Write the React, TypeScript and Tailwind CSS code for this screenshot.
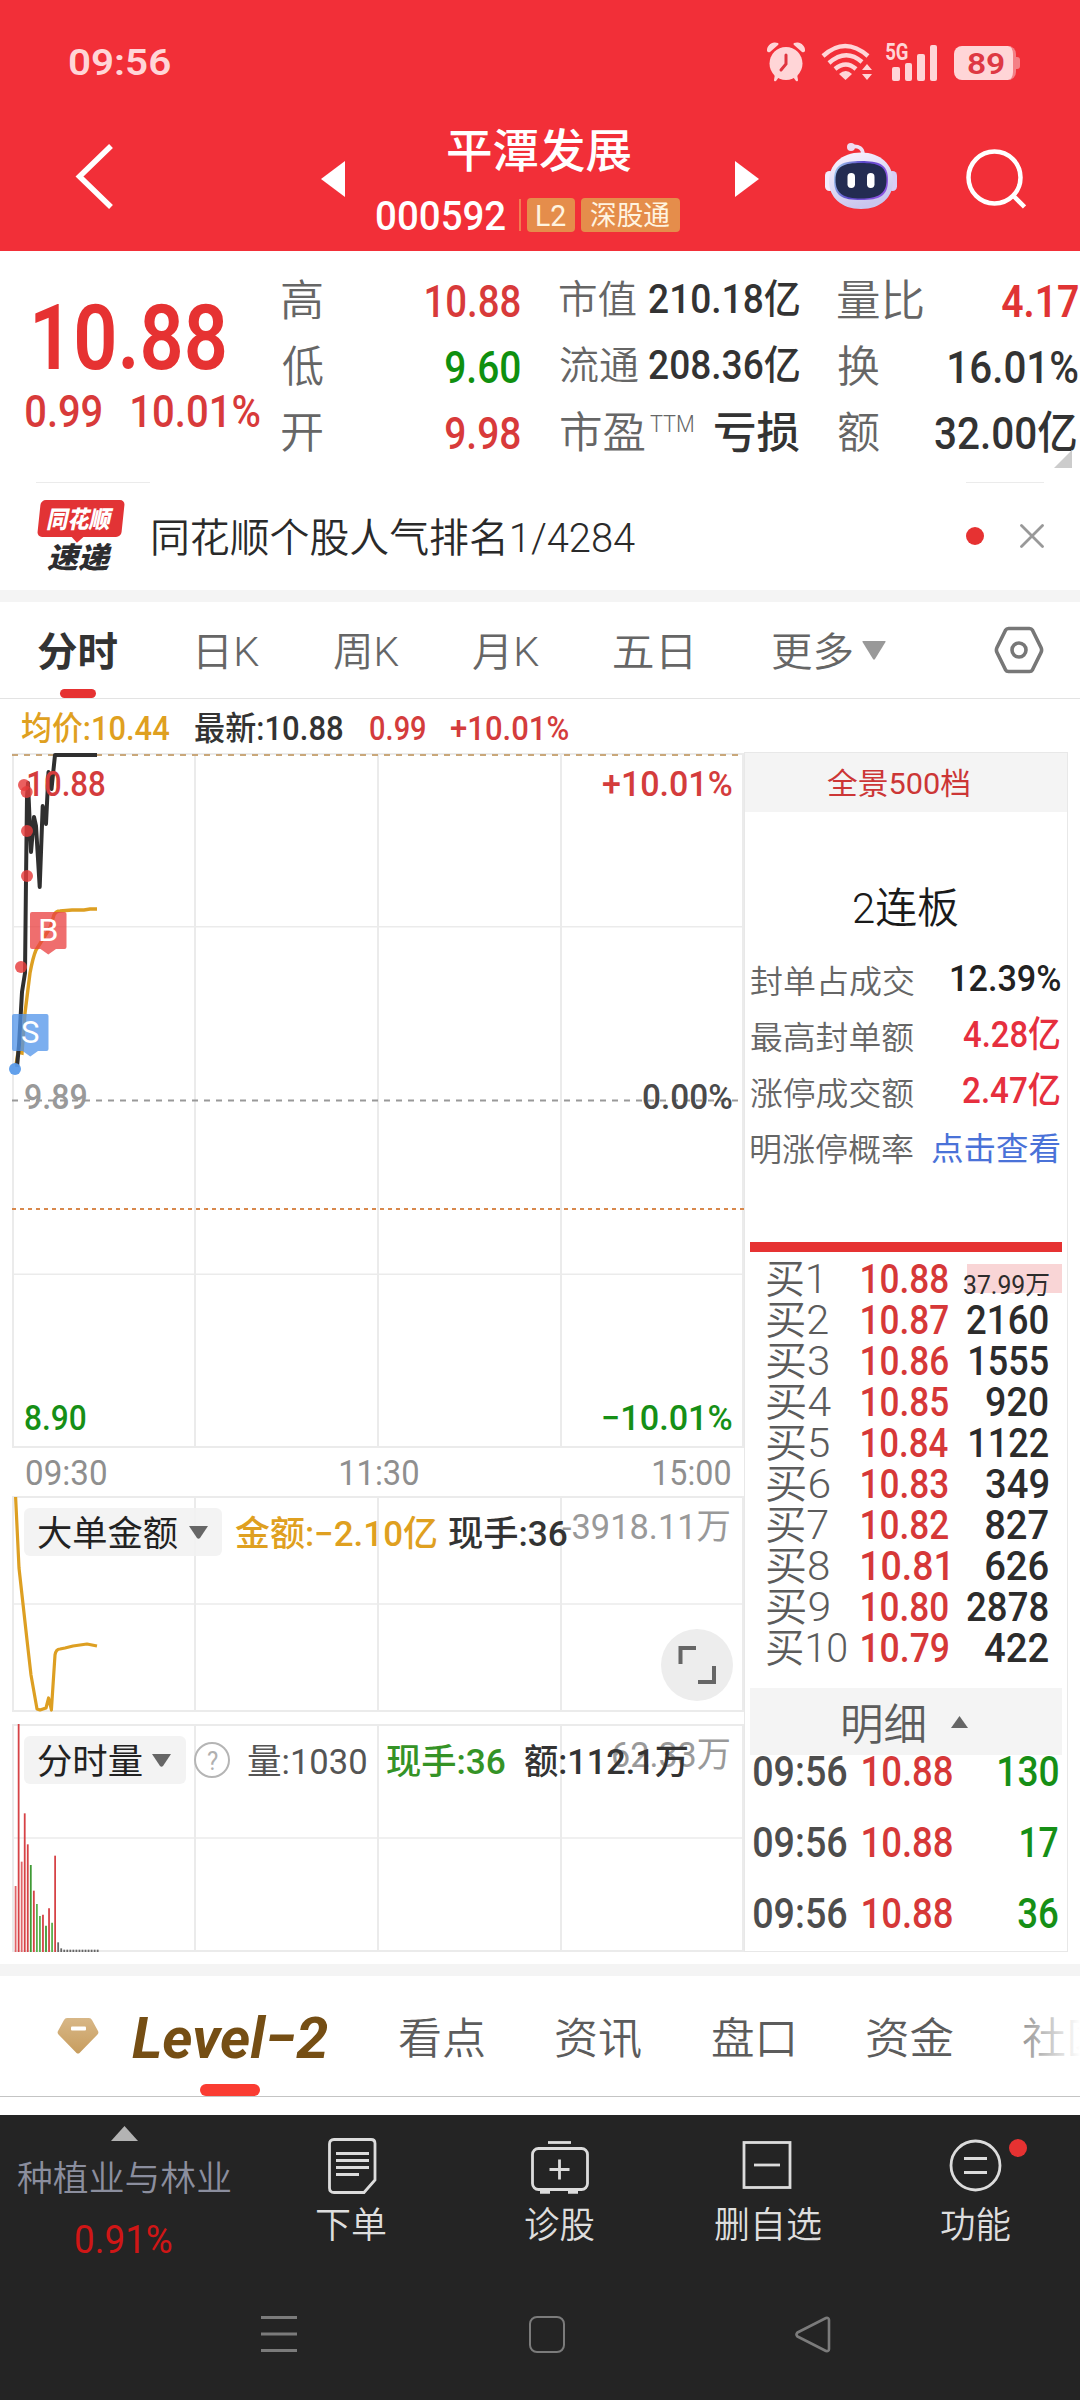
import React, { useLayoutEffect, useRef } from "react";

/** One line of text whose ink is stretched horizontally to fill the box given by className. */
function Fit({ children, className = "" }: { children: string; className?: string }) {
  const box = useRef<HTMLDivElement>(null);
  const ink = useRef<HTMLSpanElement>(null);
  useLayoutEffect(() => {
    const b = box.current;
    const t = ink.current;
    const ctx = document.createElement("canvas").getContext("2d");
    if (!b || !t || !ctx) return;
    const cs = getComputedStyle(t);
    ctx.font = `${cs.fontStyle} ${cs.fontWeight} ${cs.fontSize} ${cs.fontFamily}`;
    const m = ctx.measureText(children);
    const left = -m.actualBoundingBoxLeft;
    const k = b.clientWidth / (m.actualBoundingBoxRight - left);
    t.style.transform = `translate(${-left * k}px, 0.035em) scaleX(${k})`;
  }, [children]);
  return (
    <div ref={box} className={"shrink-0 whitespace-nowrap leading-none " + className}>
      <span ref={ink} className="block w-max origin-left">
        {children}
      </span>
    </div>
  );
}

function StatusBar() {
  return (
    <div className="flex h-[123px] items-center text-[#ffd5d7]">
      <Fit className="ml-[69px] w-[101px] text-[37px] font-semibold">09:56</Fit>
      <svg className="ml-[597px] h-[40px] w-[38px] shrink-0" viewBox="0 0 38 40" fill="currentColor">
        <path d="M0 9a8 8 0 0 1 11-8q1 1 0 2L3 10Q1 11 0 9Z M38 9a8 8 0 0 0-11-8q-1 1 0 2l8 7q2 1 3-1Z" />
        <path d="M8 32l4 3-3 4q-2 1-2-1z M30 32l-4 3 3 4q2 1 2-1z" />
        <circle cx="19" cy="21.5" r="16.5" />
        <path d="M19 13v9l-5 6" fill="none" stroke="#e0353f" strokeWidth="3" strokeLinecap="round" />
      </svg>
      <svg className="ml-[16px] h-[38px] w-[52px] shrink-0" viewBox="0 0 52 38" fill="none" stroke="currentColor">
        <path d="M2 13Q24-7 47 13" strokeWidth="4.4" />
        <path d="M8 20Q25 5 41 19" strokeWidth="4.4" />
        <path d="M14 26Q25 17 35 26" strokeWidth="4.4" />
        <path d="M18 31q7-6 13 0l-6.500 6z" fill="currentColor" stroke="none" />
        <path d="M41 27l5-6 5 6z M41 31l5 6 5-6z" fill="currentColor" stroke="none" />
      </svg>
      <div className="relative ml-[13px] h-[38px] w-[52px] shrink-0">
        <Fit className="absolute left-0 top-[-3px] w-[22px] text-[23px] font-bold">5G</Fit>
        <div className="flex h-full items-end gap-[5px] pl-[6px]">
          <i className="h-[14px] w-[7.500px] rounded-[2px] bg-[#ffd5d7]" />
          <i className="h-[18px] w-[7.500px] rounded-[2px] bg-[#ffd5d7]" />
          <i className="h-[27px] w-[7.500px] rounded-[2px] bg-[#ffd5d7]" />
          <i className="h-[36px] w-[7.500px] rounded-[2px] bg-[#ffd5d7]" />
        </div>
      </div>
      <div className="ml-[16px] mt-[3px] flex h-[34px] w-[62px] shrink-0 items-center overflow-hidden rounded-[8px] border-r-[3px] border-[#f47f86] bg-[#ffd5d7] pl-[14px]">
        <Fit className="w-[36px] text-[30px] font-semibold text-[#de3843]">89</Fit>
      </div>
      <div className="mt-[3px] h-[12px] w-[4px] rounded-r-[3px] bg-[#f47f86]" />
    </div>
  );
}

function Robot() {
  return (
    <svg className="h-[66px] w-[72px]" viewBox="0 0 72 66">
      <defs>
        <linearGradient id="shell" x1="0" y1="0" x2="0.4" y2="1">
          <stop offset="0" stopColor="#fdf6ff" />
          <stop offset="1" stopColor="#c9c6ee" />
        </linearGradient>
        <linearGradient id="rim" x1="0" y1="0" x2="1" y2="0.3">
          <stop offset="0" stopColor="#a9dcf5" />
          <stop offset="0.5" stopColor="#5a48c8" />
          <stop offset="1" stopColor="#8a55e0" />
        </linearGradient>
      </defs>
      <path d="M27 3.500q11-1 11 8" fill="none" stroke="#efe0f4" strokeWidth="3.600" />
      <circle cx="26" cy="4" r="4" fill="#efdcf1" />
      <rect x="0" y="28" width="9" height="20" rx="4.500" fill="#f3ecfd" />
      <rect x="63" y="28" width="9" height="20" rx="4.500" fill="#d9cdf5" />
      <path d="M36 9.500C56 9.500 68 22 68 38S56 66 36 66 4 54 4 38 16 9.500 36 9.500Z" fill="url(#shell)" />
      <path d="M36 18c18 0 27 3 27 19s-8 20-27 20S9 53 9 37s9-19 27-19Z" fill="url(#rim)" />
      <path d="M36 20c17 0 25.500 3 25.500 17s-8.500 18.500-25.500 18.500-25.500-4.500-25.500-18.500 8.500-17 25.500-17Z" fill="#232c52" />
      <rect x="22.500" y="30" width="7.500" height="15" rx="3.700" fill="#fff" />
      <rect x="42" y="30" width="7.500" height="15" rx="3.700" fill="#fff" />
    </svg>
  );
}

function Header() {
  return (
    <header className="h-[251px] bg-[#f22f38] text-white">
      <StatusBar />
      <div className="flex h-[128px] items-start">
        <svg className="ml-[74px] mt-[20px] h-[66px] w-[40px] shrink-0" viewBox="0 0 40 66" fill="none" stroke="#fff" strokeWidth="5.500">
          <path d="M37 3 5.500 33.500 37 64" />
        </svg>
        <svg className="ml-[207px] mt-[38px] h-[36px] w-[24px] shrink-0" viewBox="0 0 24 36" fill="#fff">
          <path d="M24 0v36L0 18z" />
        </svg>
        <div className="ml-[32px] w-[303px] shrink-0 pt-[3px]">
          <Fit className="ml-[71px] w-[183px] text-[46px] font-medium">平潭发展</Fit>
          <div className="mt-[26px] flex h-[34px] items-center">
            <Fit className="w-[128px] text-[41px] font-medium">000592</Fit>
            <div className="ml-[14px] h-[32px] w-[2px] bg-[#f27b50]" />
            <div className="ml-[6px] flex h-[34px] w-[48px] items-center rounded-[4px] bg-[#e58d4b] pl-[10px] text-[#fff4e0]">
              <Fit className="w-[29px] text-[29px]">L2</Fit>
            </div>
            <div className="ml-[6px] flex h-[34px] w-[99px] items-center rounded-[4px] bg-[#e58d4b] pl-[10px] text-[#fff4e0]">
              <Fit className="w-[79px] text-[27px]">深股通</Fit>
            </div>
          </div>
        </div>
        <svg className="ml-[55px] mt-[38px] h-[36px] w-[24px] shrink-0" viewBox="0 0 24 36" fill="#fff">
          <path d="M0 0v36l24-18z" />
        </svg>
        <div className="ml-[66px] mt-[20px] shrink-0">
          <Robot />
        </div>
        <svg className="ml-[69px] mt-[26px] h-[60px] w-[60px] shrink-0" viewBox="0 0 60 60" fill="none" stroke="#fff" strokeWidth="4.500">
          <circle cx="28.500" cy="28.500" r="26" />
          <path d="M47.500 47 58.500 58" />
        </svg>
      </div>
    </header>
  );
}

function Quote() {
  return (
    <section className="relative flex h-[231px] bg-white text-[#333]">
      <div className="w-[282px] pt-[40px]">
        <Fit className="ml-[35px] w-[190px] text-[90px] font-semibold text-[#e63232]">10.88</Fit>
        <div className="mt-[6px] flex text-[45px] font-medium text-[#d83a3a]">
          <Fit className="ml-[26px] w-[75px]">0.99</Fit>
          <Fit className="ml-[31px] w-[128px]">10.01%</Fit>
        </div>
      </div>
      <div className="w-[238px] pt-[15px] text-[45px] font-medium text-[#d83a3a]">
        <div className="flex h-[66px] items-center justify-between">
          <Fit className="w-[40px] text-[43px] font-[350] text-[#666]">高</Fit>
          <Fit className="w-[94px]">10.88</Fit>
        </div>
        <div className="flex h-[66px] items-center justify-between">
          <Fit className="w-[41px] text-[43px] font-[350] text-[#666]">低</Fit>
          <Fit className="w-[74px] text-[#0f900f]">9.60</Fit>
        </div>
        <div className="flex h-[66px] items-center justify-between">
          <Fit className="w-[40px] text-[43px] font-[350] text-[#666]">开</Fit>
          <Fit className="w-[74px]">9.98</Fit>
        </div>
      </div>
      <div className="ml-[40px] w-[239px] pt-[15px] font-medium">
        <div className="flex h-[66px] items-center justify-between">
          <Fit className="w-[76px] text-[39px] font-[350] text-[#666]">市值</Fit>
          <Fit className="w-[150px] text-[40px]">210.18亿</Fit>
        </div>
        <div className="flex h-[66px] items-center justify-between">
          <Fit className="w-[78px] text-[39px] font-[350] text-[#666]">流通</Fit>
          <Fit className="w-[150px] text-[40px]">208.36亿</Fit>
        </div>
        <div className="flex h-[66px] items-center">
          <Fit className="ml-px w-[84px] text-[43px] font-[350] text-[#666]">市盈</Fit>
          <Fit className="mb-[16px] ml-[5px] w-[43px] text-[23px] font-light text-[#666]">TTM</Fit>
          <Fit className="ml-[22px] w-[84px] text-[43px]">亏损</Fit>
        </div>
      </div>
      <div className="ml-[39px] w-[240px] pt-[15px] text-[45px] font-medium">
        <div className="flex h-[66px] items-center justify-between">
          <Fit className="w-[85px] text-[43px] font-[350] text-[#666]">量比</Fit>
          <Fit className="w-[76px] font-semibold text-[#e03434]">4.17</Fit>
        </div>
        <div className="flex h-[66px] items-center justify-between">
          <Fit className="w-[41px] text-[43px] font-[350] text-[#666]">换</Fit>
          <Fit className="w-[129px]">16.01%</Fit>
        </div>
        <div className="flex h-[66px] items-center justify-between">
          <Fit className="w-[41px] text-[43px] font-[350] text-[#666]">额</Fit>
          <Fit className="mr-[2px] w-[141px]">32.00亿</Fit>
        </div>
      </div>
      <svg className="absolute bottom-[14px] right-[8px] h-[18px] w-[18px]" viewBox="0 0 18 18" fill="#ccc">
        <path d="M18 0v18H0z" />
      </svg>
    </section>
  );
}

function Notice() {
  return (
    <section className="h-[108px] bg-white">
      <div className="flex h-px justify-between pl-[36px] pr-[36px]">
        <div className="w-[114px] bg-[#ebebeb]" />
        <div className="w-[78px] bg-[#ebebeb]" />
      </div>
      <div className="flex items-start pt-[17px]">
        <div className="ml-[37px] h-[74px] w-[88px] shrink-0 font-black italic">
          <div className="relative mx-[2px] flex h-[37px] w-[84px] -skew-x-6 items-center rounded-[5px] bg-[#e23335] pl-[8px]">
            <Fit className="w-[67px] skew-x-6 text-[24px] text-white">同花顺</Fit>
            <div className="absolute bottom-[-4px] left-[36px] h-[9px] w-[9px] rotate-45 bg-[#e23335]" />
          </div>
          <Fit className="ml-[10px] mt-[6px] w-[65px] text-[29px] text-[#2d2d2f]">速递</Fit>
        </div>
        <Fit className="ml-[28px] mt-[18px] w-[482px] text-[40px] font-[350] text-[#2a2a2a]">同花顺个股人气排名1/4284</Fit>
        <div className="ml-[331px] mt-[27px] h-[18px] w-[18px] shrink-0 rounded-full bg-[#e63232]" />
        <svg className="ml-[36px] mt-[24px] h-[24px] w-[24px] shrink-0" viewBox="0 0 24 24" stroke="#999" strokeWidth="2.800" strokeLinecap="round">
          <path d="M1.500 1.500l21 21M22.500 1.500l-21 21" />
        </svg>
      </div>
    </section>
  );
}

function PeriodTabs() {
  return (
    <nav className="flex h-[97px] items-center border-b border-[#e3e3e3] bg-white text-[40px] font-[350] text-[#666]">
      <div className="relative ml-[38px] flex h-full items-center pt-[3px]">
        <Fit className="w-[79px] font-bold text-[#333]">分时</Fit>
        <div className="absolute bottom-0 left-[22px] h-[9px] w-[36px] rounded-full bg-[#e63232]" />
      </div>
      <Fit className="ml-[82px] mt-[3px] w-[60px]">日K</Fit>
      <Fit className="ml-[75px] mt-[3px] w-[65px]">周K</Fit>
      <Fit className="ml-[74px] mt-[3px] w-[66px]">月K</Fit>
      <Fit className="ml-[75px] mt-[3px] w-[77px]">五日</Fit>
      <Fit className="ml-[81px] mt-[3px] w-[80px]">更多</Fit>
      <svg className="ml-[10px] h-[19px] w-[24px] shrink-0" viewBox="0 0 24 19" fill="#999">
        <path d="M1 0h22q1 0 .5 1L13 18q-1 1.500-2 0L.5 1Q0 0 1 0Z" />
      </svg>
      <svg className="ml-[108px] h-[48px] w-[50px] shrink-0" viewBox="0 0 50 48" fill="none" stroke="#777" strokeWidth="3.600" strokeLinejoin="round">
        <path d="M14.500 2.500h21q2 0 3 1.700L47 21.500q1.200 2.500 0 5L38.500 43.800q-1 1.700-3 1.700h-21q-2 0-3-1.700L3 26.500q-1.200-2.500 0-5L11.500 4.200q1-1.700 3-1.700Z" />
        <circle cx="25" cy="24" r="7" />
      </svg>
    </nav>
  );
}

function ChartInfo() {
  return (
    <div className="flex h-[55px] items-center pt-[2px] text-[33px] font-medium">
      <Fit className="ml-[22px] w-[147px] text-[#dfa020]">均价:10.44</Fit>
      <Fit className="ml-[26px] w-[148px] text-[#333]">最新:10.88</Fit>
      <Fit className="ml-[27px] w-[55px] text-[#d43c3c]">0.99</Fit>
      <Fit className="ml-[26px] w-[117px] text-[#d43c3c]">+10.01%</Fit>
    </div>
  );
}

function Grid({ top, mid, bottom }: { top: number; mid: number[]; bottom: number }) {
  return (
    <g stroke="#ebebeb" strokeWidth="2">
      <path d={`M12 ${top}H744M12 ${bottom}H744`} />
      {[13, 195, 378, 561, 743].map((x) => (
        <path key={x} d={`M${x} ${top}V${bottom}`} />
      ))}
      {mid.map((y) => (
        <path key={y} d={`M12 ${y}H744`} strokeWidth="1.500" />
      ))}
    </g>
  );
}

const signals = [
  [24, 785],
  [26.7, 792],
  [27, 831],
  [27, 876],
  [21, 967],
];

function PriceChart() {
  return (
    <div className="relative h-[694px] w-[744px] text-[35px] font-medium">
      <svg className="block h-[694px] w-[744px] overflow-visible" viewBox="0 754 744 694" fill="none">
        <Grid top={754} mid={[926.7, 1274.300]} bottom={1447} />
        <path d="M12 755H744" stroke="#c9a77a" strokeWidth="2" strokeDasharray="6 6" />
        <path d="M12 1100.500H744" stroke="#999" strokeWidth="1.800" strokeDasharray="6 6" />
        <path d="M12 1209H744" stroke="#d8884c" strokeWidth="2" strokeDasharray="4 4" />
        <path
          d="M16 1065 18 1052 22 1053 25 1013 30 973Q33 957 36 950L41 942 50 928 54 915Q56 911 60 911L72 910 84 910 90 909H97"
          stroke="#dd9f22"
          strokeWidth="3.400"
        />
        <path
          d="M17 1067 19 1045 22 992 25 973 26 880 27 797 28 783 31 852 34 817 36 826 39.700 887 42.700 806 46 824 48.500 772 51.500 789 55 755H97"
          stroke="#2f2f2f"
          strokeWidth="4"
          strokeLinejoin="round"
        />
        {signals.map(([x, y], i) => (
          <circle key={i} cx={x} cy={y} r="6" fill="#e63c3c" fillOpacity="0.82" />
        ))}
        <circle cx="15" cy="1069" r="6" fill="#5a9bea" fillOpacity="0.95" />
        <path d="M32 912h32.500q2 0 2 2v33q0 2-2 2H56l-7.700 5.500-7.700-5.500H32q-2 0-2-2v-33q0-2 2-2Z" fill="#ea4040" fillOpacity="0.76" />
        <path d="M14 1014h32.500q2 0 2 2v33q0 2-2 2H38l-7.700 5.500-7.700-5.500H14q-2 0-2-2v-33q0-2 2-2Z" fill="#5294ea" fillOpacity="0.76" />
      </svg>
      <Fit className="absolute left-[28px] top-[12px] w-[77px] text-[#d43c3c]">10.88</Fit>
      <Fit className="absolute left-[603px] top-[12px] w-[129px] text-[#d43c3c]">+10.01%</Fit>
      <Fit className="absolute left-[40px] top-[160px] w-[17px] text-[31px] font-normal text-white">B</Fit>
      <Fit className="absolute left-[22px] top-[262px] w-[17px] text-[31px] font-normal text-white">S</Fit>
      <Fit className="absolute left-[25px] top-[325px] w-[61px] text-[#999]">9.89</Fit>
      <Fit className="absolute left-[643px] top-[325px] w-[89px] text-[#4a4a4a]">0.00%</Fit>
      <Fit className="absolute left-[25px] top-[646px] w-[61px] text-[#168f16]">8.90</Fit>
      <Fit className="absolute left-[603px] top-[646px] w-[129px] text-[#168f16]">−10.01%</Fit>
    </div>
  );
}

function OrderFlowChart() {
  return (
    <div className="relative h-[216px] w-[744px] text-[35px]">
      <svg className="block h-[216px] w-[744px]" viewBox="0 1496 744 216" fill="none">
        <Grid top={1497} mid={[1604]} bottom={1711} />
        <path
          d="M15.600 1497 19 1568 27 1640 31 1675 37 1709 40 1710 46 1708 48.600 1698 51.400 1710 55 1655Q56 1649 60 1649L65 1648 73 1646 80 1645 87 1644 97 1646"
          stroke="#dd9f22"
          strokeWidth="3.200"
          strokeLinejoin="round"
        />
        <circle cx="697" cy="1665" r="36" fill="#ededed" />
        <path d="M680.500 1664V1648H696M714 1666v16H698" stroke="#666" strokeWidth="4" />
      </svg>
      <Fit className="absolute left-[562px] top-[13px] w-[167px] text-[#999]">-3918.11万</Fit>
      <div className="absolute left-[24px] top-[12px] flex h-[48px] items-center text-[35px] font-medium">
        <div className="flex h-full w-[198px] items-center rounded-[6px] bg-[#f2f2f2]/90 pl-[14px]">
          <Fit className="mt-[3px] w-[140px] font-normal text-[#222]">大单金额</Fit>
          <svg className="ml-[11px] h-[13px] w-[19px]" viewBox="0 0 19 13" fill="#666">
            <path d="M0 0h19L11 12q-1.500 1.500-3 0z" />
          </svg>
        </div>
        <Fit className="ml-[13px] mt-[3px] w-[202px] text-[#dfa020]">金额:−2.10亿</Fit>
        <Fit className="ml-[12px] mt-[3px] w-[118px] text-[#333]">现手:36</Fit>
      </div>
    </div>
  );
}

const volumes: [number, string][] = [
  [1218, "#e06468"],
  [732, "#d64246"],
  [1145, "#e06468"],
  [1000, "#d64246"],
  [1093, "#d64246"],
  [1155, "#3f9a35"],
  [1232, "#d64246"],
  [1272, "#58b04c"],
  [1308, "#58b04c"],
  [1304, "#d64246"],
  [1337, "#3f9a35"],
  [1285, "#d64246"],
  [1328, "#58b04c"],
  [1127, "#d64246"],
  [1387, "#666"],
  [1405, "#666"],
  ...Array.from({ length: 12 }, (): [number, string] => [1409, "#666"]),
];

function VolumeChart() {
  return (
    <div className="relative mt-[12px] h-[228px] w-[744px] text-[35px]">
      <svg className="block h-[228px] w-[744px]" viewBox="0 1724 744 228" fill="none">
        <Grid top={1725} mid={[1838]} bottom={1951} />
        {volumes.map(([v, color], i) => (
          <path key={i} d={`M${15.6 + i * 3.04} ${1480 + v / 3}V1952`} stroke={color} strokeWidth="1.800" />
        ))}
      </svg>
      <Fit className="absolute left-[613px] top-[13px] w-[116px] text-[#999]">62.33万</Fit>
      <div className="absolute left-[24px] top-[12px] flex h-[48px] items-center font-medium">
        <div className="flex h-full w-[162px] items-center rounded-[6px] bg-[#f2f2f2]/90 pl-[14px]">
          <Fit className="mt-[3px] w-[104px] font-normal text-[#222]">分时量</Fit>
          <svg className="ml-[10px] h-[13px] w-[19px]" viewBox="0 0 19 13" fill="#666">
            <path d="M0 0h19L11 12q-1.500 1.500-3 0z" />
          </svg>
        </div>
        <div className="ml-[8px] flex h-[36px] w-[36px] items-center justify-center rounded-full border-[2.500px] border-[#b5b5b5]">
          <Fit className="w-[11px] text-[26px] font-normal text-[#b0b0b0]">?</Fit>
        </div>
        <Fit className="ml-[18px] mt-[3px] w-[118px] font-normal text-[#555]">量:1030</Fit>
        <Fit className="ml-[21px] mt-[3px] w-[118px] text-[#359326]">现手:36</Fit>
        <Fit className="ml-[20px] mt-[3px] w-[162px] text-[#333]">额:112.1万</Fit>
      </div>
    </div>
  );
}

function Charts() {
  return (
    <div className="w-[744px] shrink-0">
      <PriceChart />
      <div className="flex h-[48px] items-center text-[35px] text-[#8f8f8f]">
        <Fit className="ml-[26px] w-[80px]">09:30</Fit>
        <Fit className="ml-[234px] w-[78px]">11:30</Fit>
        <Fit className="ml-[235px] w-[77px]">15:00</Fit>
      </div>
      <OrderFlowChart />
      <VolumeChart />
    </div>
  );
}

const bids: [string, string, string, string, string][] = [
  ["买1", "w-[52px]", "10.88", "", ""],
  ["买2", "w-[61px]", "10.87", "2160", "w-[81px]"],
  ["买3", "w-[61px]", "10.86", "1555", "w-[78px]"],
  ["买4", "w-[64px]", "10.85", "920", "w-[62px]"],
  ["买5", "w-[62px]", "10.84", "1122", "w-[78px]"],
  ["买6", "w-[63px]", "10.83", "349", "w-[62px]"],
  ["买7", "w-[61px]", "10.82", "827", "w-[62px]"],
  ["买8", "w-[62px]", "10.81", "626", "w-[62px]"],
  ["买9", "w-[62px]", "10.80", "2878", "w-[81px]"],
  ["买10", "w-[79px]", "10.79", "422", "w-[63px]"],
];

const ticks: [string, string][] = [
  ["130", "w-[59px]"],
  ["17", "w-[37px]"],
  ["36", "w-[40px]"],
];

function OrderBook() {
  return (
    <div className="mt-[-2px] h-[1200px] w-[324px] shrink-0 border border-[#e8e8e8]">
      <div className="flex h-[59px] items-center bg-[#f4f4f4] pl-[82px]">
        <Fit className="w-[142px] text-[30px] text-[#cc3636]">全景500档</Fit>
      </div>
      <Fit className="ml-[109px] mt-[75px] w-[104px] text-[42px] font-[350] text-[#1a1a1a]">2连板</Fit>
      <div className="mt-[21px] pl-[6px] pr-[7px] text-[32px] font-[350] text-[#666]">
        <div className="flex h-[56px] items-center justify-between">
          <Fit className="mt-[5px] w-[163px]">封单占成交</Fit>
          <Fit className="w-[109px] text-[36px] font-medium text-[#222]">12.39%</Fit>
        </div>
        <div className="flex h-[56px] items-center justify-between">
          <Fit className="mt-[5px] w-[163px]">最高封单额</Fit>
          <Fit className="w-[97px] text-[36px] font-medium text-[#e62f3e]">4.28亿</Fit>
        </div>
        <div className="flex h-[56px] items-center justify-between">
          <Fit className="mt-[5px] w-[163px]">涨停成交额</Fit>
          <Fit className="w-[97px] text-[36px] font-medium text-[#e62f3e]">2.47亿</Fit>
        </div>
        <div className="flex h-[56px] items-center justify-between">
          <Fit className="mt-[5px] w-[162px]">明涨停概率</Fit>
          <Fit className="mt-[4px] w-[128px] font-normal text-[#4a72d8]">点击查看</Fit>
        </div>
      </div>
      <div className="ml-[5px] mt-[68px] h-[10px] w-[312px] bg-[#e63232]" />
      <div className="mt-[6px]">
        {bids.map(([name, nameW, price, vol, volW]) => (
          <div key={name} className="relative flex h-[41px] items-center">
            <div className="ml-[22px] mt-px w-[95px]">
              <Fit className={"text-[40px] font-[350] text-[#5c5c5c] " + nameW}>{name}</Fit>
            </div>
            <Fit className="w-[86px] text-[41px] font-medium text-[#d63838]">{price}</Fit>
            {vol ? (
              <div className="mr-[19px] flex grow justify-end">
                <Fit className={"text-[41px] font-medium text-[#2c2c2c] " + volW}>{vol}</Fit>
              </div>
            ) : (
              <div className="absolute right-[5px] top-[6px] h-[29px] w-[95px] bg-[#f9d5d6]">
                <Fit className="ml-[-3px] mt-[7px] w-[85px] text-[26px] text-[#2c2c2c]">37.99万</Fit>
              </div>
            )}
          </div>
        ))}
      </div>
      <div className="ml-[5px] mt-[20px] flex h-[67px] w-[312px] items-center bg-[#f4f4f4] pl-[93px]">
        <Fit className="mt-[4px] w-[81px] text-[43px] font-[350] text-[#5c5c5c]">明细</Fit>
        <svg className="ml-[27px] h-[12px] w-[17px]" viewBox="0 0 17 12" fill="#666">
          <path d="M8.500 0 17 12H0z" />
        </svg>
      </div>
      <div className="mt-[-7px]">
        {ticks.map(([vol, volW], i) => (
          <div key={i} className="mb-[25px] flex h-[46px] items-center pl-[9px] pr-[9px] text-[42px] font-medium">
            <Fit className="w-[93px] text-[#4d4d4d]">09:56</Fit>
            <Fit className="ml-[16px] w-[89px] text-[#d63838]">10.88</Fit>
            <div className="flex grow justify-end">
              <Fit className={"text-[#168f16] " + volW}>{vol}</Fit>
            </div>
          </div>
        ))}
      </div>
    </div>
  );
}

function SectionTabs() {
  return (
    <nav className="relative h-[121px] overflow-hidden border-b border-[#c4c4c4] bg-white">
      <div className="flex h-full items-center text-[43px] font-[350] text-[#5c5c5c]">
        <svg className="ml-[57px] h-[36px] w-[42px] shrink-0" viewBox="0 0 42 36">
          <defs>
            <linearGradient id="gem" x1="0" y1="0" x2="0" y2="1">
              <stop offset="0" stopColor="#d8b787" />
              <stop offset="1" stopColor="#c79d5e" />
            </linearGradient>
          </defs>
          <path d="M10 0h22q2 0 3 2l6 11q1 2-.5 3.500L22.500 35q-1.500 1-3 0L1.500 16.500Q0 15 1 13L7 2q1-2 3-2Z" fill="url(#gem)" />
          <rect x="14" y="8.500" width="15" height="4" rx="1" fill="#fff" />
        </svg>
        <Fit className="ml-[33px] w-[196px] text-[58px] font-bold italic text-[#754e14]">Level−2</Fit>
        <Fit className="ml-[71px] mt-[2px] w-[85px]">看点</Fit>
        <Fit className="ml-[72px] mt-[2px] w-[85px]">资讯</Fit>
        <Fit className="ml-[71px] mt-[2px] w-[81px]">盘口</Fit>
        <Fit className="ml-[74px] mt-[2px] w-[86px]">资金</Fit>
        <Fit className="ml-[70px] mt-[2px] w-[85px]">社区</Fit>
      </div>
      <div className="absolute right-0 top-0 h-[119px] w-[72px] bg-linear-to-r from-white/20 to-white" />
      <div className="absolute bottom-0 left-[200px] h-[12px] w-[60px] rounded-full bg-[#fa3c32]" />
    </nav>
  );
}

function BottomBar() {
  return (
    <footer className="h-[285px] bg-[#242424] text-[36px] font-[350] text-[#dedede]">
      <div className="flex h-[165px] items-start">
        <div className="ml-[17px] w-[213px] shrink-0">
          <svg className="ml-[94px] mt-[11px] block h-[15px] w-[27px]" viewBox="0 0 27 15" fill="#b3b3b3">
            <path d="M13.500 0 27 15H0z" />
          </svg>
          <Fit className="mt-[20px] w-[213px] text-[35px] text-[#8b8e9e]">种植业与林业</Fit>
          <Fit className="ml-[59px] mt-[24px] w-[96px] text-[38px] font-normal text-[#d01616]">0.91%</Fit>
        </div>
        <div className="ml-[87px] mt-[22px] w-[69px] shrink-0">
          <svg className="ml-[10px] block h-[58px] w-[50px]" viewBox="0 0 50 58" fill="none" stroke="#dcdcdc" strokeWidth="2.800">
            <path d="M7 2.500h37q4 0 4 4V43L37 55.500H7q-4.500 0-4.500-4.500V7Q2.500 2.500 7 2.500Z" />
            <path d="M9 16.500h33M9 23.500h33M9 30.500h33M9 37.500h23" />
          </svg>
          <Fit className="mt-[12px] w-[69px]">下单</Fit>
        </div>
        <div className="ml-[139px] mt-[22px] w-[69px] shrink-0">
          <svg className="ml-[5px] block h-[58px] w-[60px]" viewBox="0 0 60 58" fill="none" stroke="#dcdcdc" strokeWidth="2.800">
            <rect x="2.500" y="11.500" width="55" height="41" rx="6" />
            <path d="M18 5.500h23" />
            <path d="M29.500 22.500v20M19.500 32.500h20" />
            <path d="M10 54.500h10M38 54.500h10" strokeWidth="4.500" />
          </svg>
          <Fit className="mt-[12px] w-[69px]">诊股</Fit>
        </div>
        <div className="ml-[121px] mt-[22px] w-[106px] shrink-0">
          <svg className="ml-[27px] block h-[58px] w-[50px]" viewBox="0 0 50 58" fill="none" stroke="#dcdcdc" strokeWidth="2.800">
            <rect x="2" y="5.500" width="46" height="45" />
            <path d="M12 28h26" />
          </svg>
          <Fit className="mt-[12px] w-[106px]">删自选</Fit>
        </div>
        <div className="relative ml-[120px] mt-[22px] w-[69px] shrink-0">
          <svg className="ml-[8px] block h-[58px] w-[54px]" viewBox="0 0 54 58" fill="none" stroke="#dcdcdc" strokeWidth="2.800">
            <circle cx="26.500" cy="28.500" r="24.500" />
            <path d="M15 21.500h23M15 35.500h23" />
          </svg>
          <Fit className="mt-[12px] w-[69px]">功能</Fit>
          <div className="absolute right-[-17px] top-[2px] h-[18px] w-[18px] rounded-full bg-[#e63232]" />
        </div>
      </div>
      <div className="flex h-[108px] items-center text-[#7b7b7b]">
        <svg className="ml-[261px] h-[38px] w-[36px]" viewBox="0 0 36 38" stroke="currentColor" strokeWidth="3">
          <path d="M0 2.500h36M0 19h36M0 35.500h36" />
        </svg>
        <div className="ml-[232px] h-[37px] w-[36px] rounded-[8px] border-[2.800px] border-[#7b7b7b]" />
        <svg className="ml-[230px] h-[37px] w-[36px]" viewBox="0 0 36 37" fill="none" stroke="currentColor" strokeWidth="2.600" strokeLinejoin="round">
          <path d="M31 2 2.500 16.500q-2 2 0 4L31 35q3 .5 3-2V4q0-2.500-3-2Z" />
        </svg>
      </div>
    </footer>
  );
}

export default function App() {
  return (
    <div className="h-[2400px] w-[1080px] overflow-hidden bg-white font-['Roboto','Noto_Sans_CJK_SC',sans-serif]">
      <Header />
      <Quote />
      <Notice />
      <div className="h-[12px] bg-[#f4f4f4]" />
      <PeriodTabs />
      <ChartInfo />
      <div className="flex h-[1210px]">
        <Charts />
        <OrderBook />
      </div>
      <div className="h-[12px] bg-[#f4f4f4]" />
      <SectionTabs />
      <div className="h-[18px] bg-white" />
      <BottomBar />
    </div>
  );
}
